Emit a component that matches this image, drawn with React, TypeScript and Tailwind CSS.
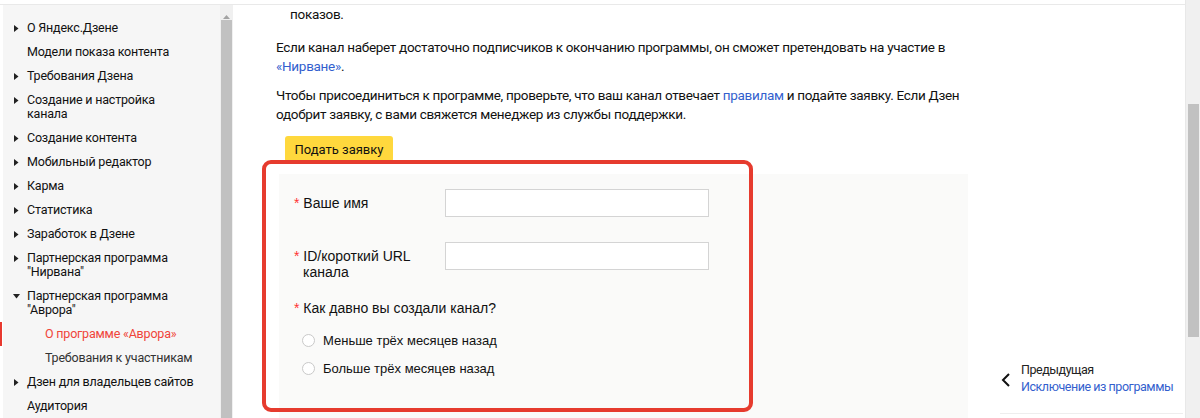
import type { ReactNode } from 'react'

type NavItem = {
  lines: string[]
  arrow?: 'right' | 'down'
  sub?: boolean
  active?: boolean
}

const navItems: NavItem[] = [
  { lines: ['О Яндекс.Дзене'], arrow: 'right' },
  { lines: ['Модели показа контента'] },
  { lines: ['Требования Дзена'], arrow: 'right' },
  { lines: ['Создание и настройка', 'канала'], arrow: 'right' },
  { lines: ['Создание контента'], arrow: 'right' },
  { lines: ['Мобильный редактор'], arrow: 'right' },
  { lines: ['Карма'], arrow: 'right' },
  { lines: ['Статистика'], arrow: 'right' },
  { lines: ['Заработок в Дзене'], arrow: 'right' },
  { lines: ['Партнерская программа', '"Нирвана"'], arrow: 'right' },
  { lines: ['Партнерская программа', '"Аврора"'], arrow: 'down' },
  { lines: ['О программе «Аврора»'], sub: true, active: true },
  { lines: ['Требования к участникам'], sub: true },
  { lines: ['Дзен для владельцев сайтов'], arrow: 'right' },
  { lines: ['Аудитория'] },
]

function Arrow({ dir }: { dir: 'right' | 'down' }) {
  if (dir === 'down') {
    return (
      <svg width="7" height="5" viewBox="0 0 7 5" className="mt-[5px]">
        <polygon points="0,0 7,0 3.5,4.5" fill="#222" />
      </svg>
    )
  }
  return (
    <svg width="5" height="7" viewBox="0 0 5 7" className="mt-[4px] ml-[1px]">
      <polygon points="0,0 4.5,3.5 0,7" fill="#222" />
    </svg>
  )
}

function SideItem({ item }: { item: NavItem }) {
  return (
    <div
      className={
        item.active
          ? '-ml-[3px] flex border-l-[2px] border-[#e8392f] py-[5px] pl-[1px]'
          : 'flex py-[5px]'
      }
    >
      <div className={item.sub ? 'w-[42px] shrink-0' : 'flex w-[24px] shrink-0 justify-center pl-[2px]'}>
        {item.arrow && <Arrow dir={item.arrow} />}
      </div>
      <div className={item.active ? 'text-[#f0453a]' : item.sub ? 'text-[#333]' : 'text-[#111]'}>
        {item.lines.map((l) => (
          <div key={l} className="whitespace-nowrap">
            {l}
          </div>
        ))}
      </div>
    </div>
  )
}

function Field({ label, children }: { label: ReactNode; children?: ReactNode }) {
  return (
    <div className="flex items-start">
      <div className="w-[151px] shrink-0 pt-[6px] leading-[16px]">
        <span className="text-[#f33]">*</span> {label}
      </div>
      {children}
    </div>
  )
}

function Radio({ text }: { text: string }) {
  return (
    <label className="ml-[8px] flex h-[20px] items-center gap-[8px] text-[13px]">
      <span className="h-[13px] w-[13px] rounded-full border border-[#c9c9c9] bg-white" />
      {text}
    </label>
  )
}

export default function App() {
  return (
    <div className="flex h-[418px] w-[1200px] overflow-hidden bg-white font-['Roboto',sans-serif] text-[#111]">
      <div className="flex min-w-0 flex-1 flex-col">
        <div className="h-[4px] shrink-0" />
        <div className="flex min-h-0 flex-1 border-t border-[#e9e9e9]">
          {/* sidebar */}
          <div className="flex w-[220px] shrink-0 border-l-[3px] border-white bg-[#f6f6f6]">
            <div className="w-full pt-[11px] text-[12.5px] leading-[14px] tracking-[-0.2px]">
              {navItems.map((it) => (
                <SideItem key={it.lines.join(' ')} item={it} />
              ))}
            </div>
          </div>
          <div className="flex w-[13px] shrink-0 flex-col items-center bg-[#f0f0f0]">
            <div className="flex h-[15px] items-end pb-[1px]">
              <svg width="7" height="4" viewBox="0 0 7 4">
                <polygon points="0,4 3.5,0 7,4" fill="#a3a3a3" />
              </svg>
            </div>
            <div className="w-[11px] flex-1 bg-[#c1c1c1]" />
          </div>

          {/* main */}
          <div className="flex flex-1 pl-[43px]">
            <div className="w-[692px] shrink-0 text-[13.5px] leading-[19px] tracking-[-0.3px]">
              <div className="pl-[14px]">показов.</div>
              <p className="mt-[14px]">
                <span className="block whitespace-nowrap">
                  Если канал наберет достаточно подписчиков к окончанию программы, он сможет претендовать на участие в
                </span>
                <a className="text-[#335fce]">«Нирване»</a>.
              </p>
              <p className="mt-[10px]">
                <span className="block whitespace-nowrap">
                  Чтобы присоединиться к программе, проверьте, что ваш канал отвечает{' '}
                  <a className="text-[#335fce]">правилам</a> и подайте заявку. Если Дзен
                </span>
                <span className="block whitespace-nowrap">
                  одобрит заявку, с вами свяжется менеджер из службы поддержки.
                </span>
              </p>
              <button className="mt-[12px] ml-[9px] h-[26px] w-[108px] rounded-[3px] bg-[#ffd83d] text-[13px] tracking-normal text-[#111]">
                Подать заявку
              </button>

              <div className="relative mt-[12px] ml-[3px] h-[260px] bg-[#fafaf9] pt-[15px] pl-[15px] font-['Liberation_Sans',Arial,sans-serif] text-[14px] tracking-normal text-[#111]">
                <Field label="Ваше имя">
                  <div className="h-[28px] w-[264px] border border-[#d4d4d4] bg-white" />
                </Field>
                <div className="mt-[25px]">
                  <Field
                    label={
                      <>
                        ID/короткий URL
                        <br />
                        <span className="pl-[9px]">канала</span>
                      </>
                    }
                  >
                    <div className="h-[28px] w-[264px] border border-[#d4d4d4] bg-white" />
                  </Field>
                </div>
                <div className="mt-[20px] leading-[16px]">
                  <span className="text-[#f33]">*</span> Как давно вы создали канал?
                </div>
                <div className="mt-[14px] flex flex-col gap-[8px]">
                  <Radio text="Меньше трёх месяцев назад" />
                  <Radio text="Больше трёх месяцев назад" />
                </div>

                {/* highlight frame */}
                <div className="pointer-events-none absolute top-[-14px] left-[-17px] h-[252px] w-[491px] rounded-[9px] border-[4px] border-[#e63b2e]" />
              </div>
            </div>

            {/* right column */}
            <div className="ml-[32px] flex w-[183px] shrink-0 flex-col justify-end pb-[4px]">
              <div className="flex items-center border-b border-[#eeeeee] pb-[18px]">
                <svg width="10" height="16" viewBox="0 0 10 16" className="ml-[1px] mt-[4px]">
                  <polyline points="8,2 2,8 8,14" fill="none" stroke="#111" strokeWidth="2" />
                </svg>
                <div className="ml-[10px] whitespace-nowrap text-[12.5px] leading-[17px] tracking-[-0.45px]">
                  <div className="text-[#222]">Предыдущая</div>
                  <a className="text-[#335fce]">Исключение из программы</a>
                </div>
              </div>
            </div>
          </div>
        </div>
      </div>
      <div className="h-full w-[15px] shrink-0 border-l border-[#e8e8e8]">
        <div className="flex h-full flex-col items-center bg-[#f0f0f0]">
          <div className="mt-[104px] h-[233px] w-[11px] bg-[#c1c1c1]" />
        </div>
      </div>
    </div>
  )
}
